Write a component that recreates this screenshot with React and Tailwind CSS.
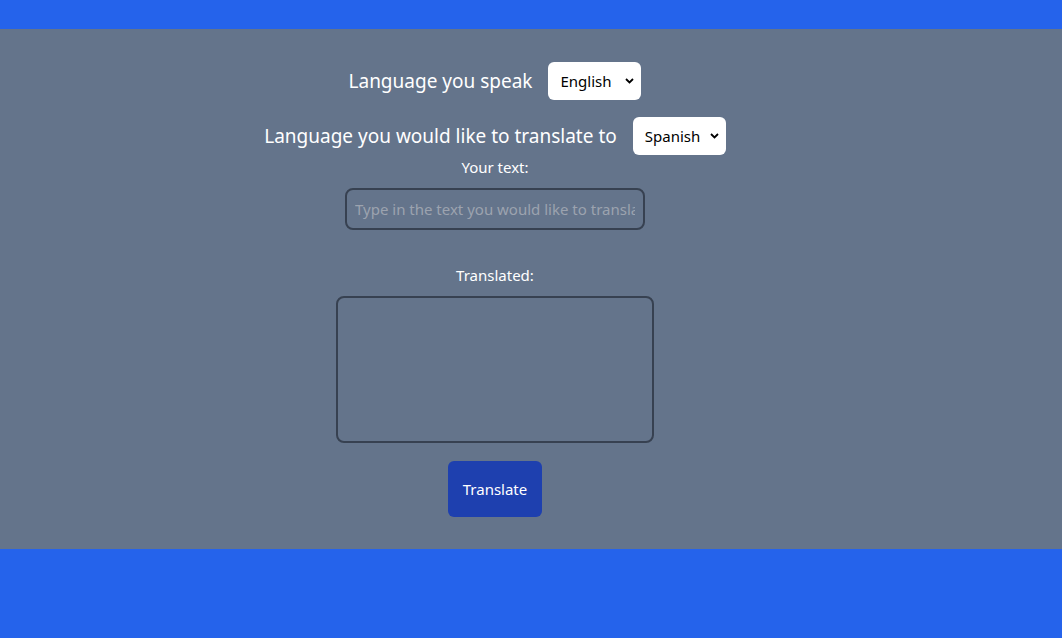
import { useState } from "react";

const LANGS = ["English", "Spanish", "French", "German", "Italian"];

function LangSelect({ value, onChange }) {
  return (
    <div className="relative">
      <select
        value={value}
        onChange={(e) => onChange(e.target.value)}
        className="h-[38px] w-[93px] appearance-none rounded-md bg-white pl-3 pr-6 text-[15px] text-black outline-none"
      >
        {LANGS.map((l) => (
          <option key={l}>{l}</option>
        ))}
      </select>
      <svg
        className="pointer-events-none absolute right-[7px] top-1/2 -translate-y-1/2"
        width="9"
        height="6"
        viewBox="0 0 9 6"
      >
        <path d="M1 1l3.5 3.5L8 1" fill="none" stroke="#000" strokeWidth="1.8" />
      </svg>
    </div>
  );
}

export default function App() {
  const [from, setFrom] = useState("English");
  const [to, setTo] = useState("Spanish");
  const [text, setText] = useState("");

  return (
    <div className="min-h-screen bg-[#2563eb] font-['Noto_Sans',sans-serif]">
      <div className="h-[29px]" />
      <main className="flex flex-col items-center bg-[#64748b] pb-8 pr-[72px] pt-[33px] text-white">
        <div className="flex items-center gap-4">
          <span className="text-[19px]">Language you speak</span>
          <LangSelect value={from} onChange={setFrom} />
        </div>
        <div className="mt-[17px] flex items-center gap-4">
          <span className="text-[19px]">Language you would like to translate to</span>
          <LangSelect value={to} onChange={setTo} />
        </div>

        <label className="text-[15px] leading-6">Your text:</label>
        <input
          value={text}
          onChange={(e) => setText(e.target.value)}
          placeholder="Type in the text you would like to translate"
          className="mt-[9px] h-[42px] w-[300px] rounded-lg border-2 border-[#374151] bg-transparent px-2 text-[15px] text-white outline-none placeholder:text-[#9ca3af]"
        />

        <label className="mt-[33px] text-[15px] leading-6">Translated:</label>
        <textarea
          readOnly
          className="mt-[9px] block h-[147px] w-[318px] resize-none rounded-lg border-2 border-[#374151] bg-transparent p-2 outline-none"
        />

        <button className="mt-[18px] h-14 w-[94px] rounded-md bg-[#1e40af] text-[15px] text-white">
          Translate
        </button>
      </main>
    </div>
  );
}
